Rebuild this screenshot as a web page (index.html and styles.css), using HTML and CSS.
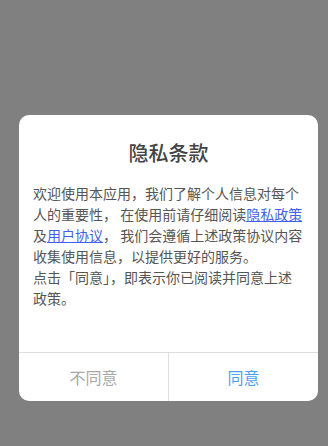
FILE: index.html
```html
<!DOCTYPE html>
<html lang="zh-CN">
<head>
<meta charset="utf-8">
<title>隐私条款</title>
<link rel="stylesheet" href="styles.css">
</head>
<body>
<div class="mask">
  <div class="dialog">
    <div class="title">隐私条款</div>
    <div class="content">
      <p>欢迎使用本应用，我们了解个人信息对每个人的重要性， 在使用前请仔细阅读<a class="link" href="#">隐私政策</a>及<a class="link" href="#">用户协议</a>， 我们会遵循上述政策协议内容收集使用信息，以提供更好的服务。</p>
      <p>点击「同意」，即表示你已阅读并同意上述政策。</p>
    </div>
    <div class="actions">
      <div class="btn btn-cancel">不同意</div>
      <div class="btn btn-ok">同意</div>
    </div>
  </div>
</div>
</body>
</html>
```
FILE: styles.css
```css
html, body {
  margin: 0;
  padding: 0;
}
body {
  width: 328px;
  height: 446px;
  overflow: hidden;
  background: #808080;
  font-family: "Noto Sans CJK SC", "Noto Sans", sans-serif;
}
.mask {
  padding: 115px 0 0 19px;
}
.dialog {
  width: 299px;
  background: #fff;
  border-radius: 10px;
  overflow: hidden;
}
.title {
  padding-top: 24px;
  font-size: 20px;
  line-height: 28px;
  text-align: center;
  color: #444;
  font-weight: 500;
}
.content {
  padding: 16px 14px 43px 14px;
  font-size: 14px;
  line-height: 21px;
  color: #555;
}
.content p {
  margin: 0;
}
.link {
  color: #3f5ff0;
  text-decoration: underline;
}
.actions {
  display: flex;
  border-top: 1px solid #dedede;
}
.btn {
  flex: 1;
  height: 48px;
  line-height: 48px;
  text-align: center;
  font-size: 16px;
}
.btn-cancel {
  color: #a8a8a8;
  border-right: 1px solid #dedede;
}
.btn-ok {
  color: #4aa0f2;
}
```
